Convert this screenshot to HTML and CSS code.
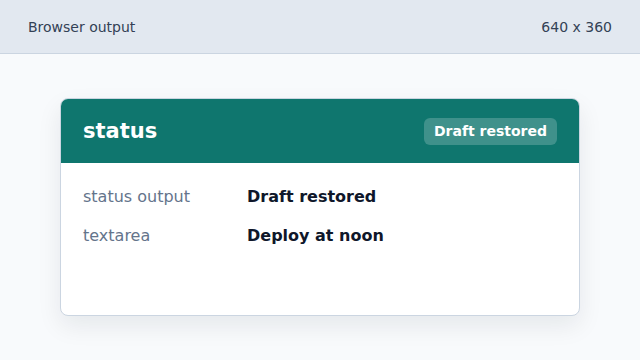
FILE: index.html
```html
<!DOCTYPE html>
<html>
<head>
    <meta charset="utf-8" />
    <title>status</title>
    <link rel="stylesheet" href="styles.css">
</head>
<body>
    <header class="topbar">
        <div class="topbar-title">Browser output</div>
        <div class="topbar-size">640 x 360</div>
    </header>
    <main class="stage">
        <div class="card">
            <div class="card-head">
                <div class="card-title">status</div>
                <div class="badge">Draft restored</div>
            </div>
            <div class="card-body">
                <div class="row">
                    <div class="row-label">status output</div>
                    <div class="row-value">Draft restored</div>
                </div>
                <div class="row">
                    <div class="row-label">textarea</div>
                    <div class="row-value">Deploy at noon</div>
                </div>
            </div>
        </div>
    </main>
</body>
</html>
```

FILE: styles.css
```css
html, body {
    margin: 0;
    height: 100%;
}

body {
    background-color: #f8fafc;
    font-family: "DejaVu Sans", sans-serif;
    color: #0f172a;
}

.topbar {
    height: 54px;
    box-sizing: border-box;
    display: flex;
    justify-content: space-between;
    align-items: center;
    padding: 0 28px;
    background-color: #e2e8f0;
    border-bottom: 1px solid #cbd5e1;
    font-size: 14px;
    color: #334155;
}

.stage {
    padding: 44px 60px 0;
}

.card {
    background: #fff;
    border: 1px solid #cbd5e1;
    border-radius: 8px;
    overflow: hidden;
    box-shadow: 0 10px 25px rgba(15, 23, 42, 0.08);
}

.card-head {
    height: 64px;
    box-sizing: border-box;
    display: flex;
    justify-content: space-between;
    align-items: center;
    padding: 0 22px;
    background-color: #0f766e;
    color: #fff;
}

.card-title {
    font-size: 21px;
    font-weight: bold;
}

.badge {
    font-size: 14px;
    font-weight: bold;
    line-height: 27px;
    padding: 0 10px;
    border-radius: 6px;
    background: rgba(255, 255, 255, 0.2);
}

.card-body {
    padding: 22px 22px 67px;
    display: flex;
    flex-direction: column;
    gap: 15px;
}

.row {
    display: grid;
    grid-template-columns: 164px 1fr;
    line-height: 24px;
    font-size: 16px;
}

.row-label {
    color: #64748b;
}

.row-value {
    font-weight: bold;
}
```
